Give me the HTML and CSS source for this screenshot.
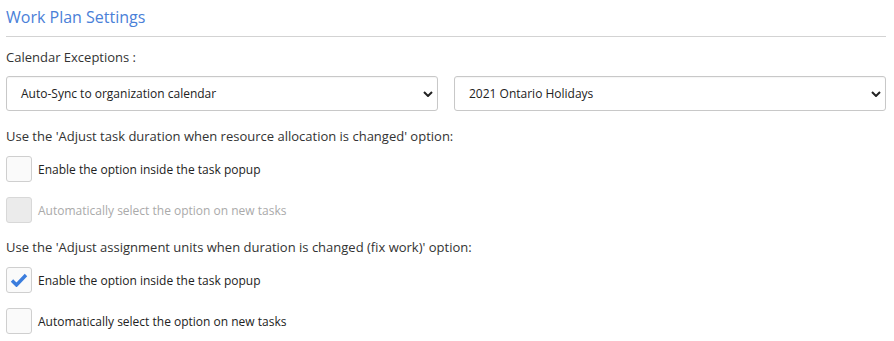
FILE: index.html
```html
<!DOCTYPE html>
<html>
<head>
<meta charset="utf-8">
<link rel="stylesheet" href="styles.css">
</head>
<body>
<div class="panel">
  <h2 class="title">Work Plan Settings</h2>
  <div class="label first">Calendar Exceptions :</div>
  <div class="selects">
    <div class="select"><span>Auto-Sync to organization calendar</span>
      <svg class="chev" width="10" height="6" viewBox="0 0 10 6"><path d="M1 1l4 4 4-4" fill="none" stroke="#222" stroke-width="2"/></svg>
    </div>
    <div class="select"><span>2021 Ontario Holidays</span>
      <svg class="chev" width="10" height="6" viewBox="0 0 10 6"><path d="M1 1l4 4 4-4" fill="none" stroke="#222" stroke-width="2"/></svg>
    </div>
  </div>
  <div class="label">Use the 'Adjust task duration when resource allocation is changed' option:</div>
  <div class="check-row"><span class="box"></span><span class="ctext">Enable the option inside the task popup</span></div>
  <div class="check-row disabled"><span class="box"></span><span class="ctext">Automatically select the option on new tasks</span></div>
  <div class="label">Use the 'Adjust assignment units when duration is changed (fix work)' option:</div>
  <div class="check-row"><span class="box"><svg width="18" height="14" viewBox="0 0 18 14"><path d="M2 7.5l4.5 4.5L16 2" fill="none" stroke="#3b7ddd" stroke-width="3.4"/></svg></span><span class="ctext">Enable the option inside the task popup</span></div>
  <div class="check-row"><span class="box"></span><span class="ctext">Automatically select the option on new tasks</span></div>
</div>
</body>
</html>
```

FILE: styles.css
```css
html, body {
  margin: 0;
  padding: 0;
  background: #fff;
}
body {
  font-family: "Open Sans", "Liberation Sans", sans-serif;
  font-size: 13px;
  color: #333;
}
.panel {
  width: 880px;
  padding: 0 0 0 6px;
}
.title {
  margin: 0;
  font-size: 16px;
  font-weight: 400;
  color: #4a80d8;
  line-height: 24px;
  padding: 5px 0 7px 0;
  border-bottom: 1px solid #d3d3d3;
}
.label {
  line-height: 18px;
  margin-top: 15px;
  color: #333;
}
.label.first {
  margin-top: 11px;
}
.selects + .label {
  margin-top: 16px;
}
.selects {
  display: flex;
  gap: 16px;
  margin-top: 10px;
}
.select {
  flex: 1;
  height: 35px;
  box-sizing: border-box;
  border: 1px solid #c8c8c8;
  border-radius: 3px;
  display: flex;
  align-items: center;
  justify-content: space-between;
  padding: 0 4px 0 14px;
  font-size: 12px;
  color: #222;
  box-shadow: inset 0 1px 1px rgba(0,0,0,0.04);
}
.check-row {
  display: flex;
  align-items: center;
  height: 26px;
  margin-top: 15px;
  font-size: 12px;
  color: #222;
}
.label + .check-row {
  margin-top: 11px;
}
.box {
  width: 26px;
  height: 26px;
  box-sizing: border-box;
  border: 1px solid #cfcfcf;
  border-radius: 3px;
  background: #fafafa;
  margin-right: 6px;
  display: flex;
  align-items: center;
  justify-content: center;
}
.disabled .box {
  background: #ebebeb;
  border-color: #d8d8d8;
}
.disabled .ctext {
  color: #aaa;
}
```
